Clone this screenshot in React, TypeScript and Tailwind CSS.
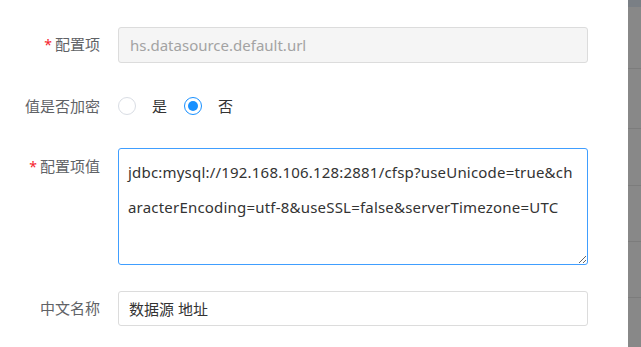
import { useState } from "react";

const font = { fontFamily: '"Noto Sans", "Noto Sans CJK SC", sans-serif' };

function Label({ text, required, top }: { text: string; required?: boolean; top?: boolean }) {
  return (
    <div
      className={`w-[118px] shrink-0 pr-[18px] text-right text-[15px] text-[#606266] leading-[36px] ${top ? "self-start" : ""}`}
    >
      {required && <span className="mr-[3px] text-[14px] text-[#f5222d]">*</span>}
      {text}
    </div>
  );
}

function Radio({ checked, label }: { checked?: boolean; label: string }) {
  return (
    <label className="flex items-center cursor-pointer">
      <span
        className={`flex h-[18px] w-[18px] items-center justify-center rounded-full border ${
          checked ? "border-[#1890ff]" : "border-[#d9dde4]"
        } bg-white`}
      >
        {checked && <span className="h-[10px] w-[10px] rounded-full bg-[#1890ff]" />}
      </span>
      <span className="ml-[16px] text-[15px] text-[#333]">{label}</span>
    </label>
  );
}

export default function App() {
  const [encrypted, setEncrypted] = useState(false);
  const [value, setValue] = useState(
    "jdbc:mysql://192.168.106.128:2881/cfsp?useUnicode=true&characterEncoding=utf-8&useSSL=false&serverTimezone=UTC"
  );

  return (
    <div className="flex h-[347px] w-[641px] overflow-hidden bg-white" style={font}>
      <div className="w-[628px] shrink-0 pt-[26px]">
        {/* 配置项 */}
        <div className="flex items-center">
          <Label text="配置项" required />
          <input
            disabled
            value="hs.datasource.default.url"
            className="h-[36px] w-[470px] rounded-[3px] border border-[#dcdcdc] bg-[#f5f5f5] px-[11px] text-[15px] text-[#a3a3a3]"
          />
        </div>

        {/* 值是否加密 */}
        <div className="mt-[23px] flex h-[40px] items-center">
          <Label text="值是否加密" />
          <div className="flex items-center gap-[17px]" onClick={() => setEncrypted(!encrypted)}>
            <Radio label="是" checked={encrypted} />
            <Radio label="否" checked={!encrypted} />
          </div>
        </div>

        {/* 配置项值 */}
        <div className="mt-[22px] flex">
          <Label text="配置项值" required top />
          <textarea
            value={value}
            onChange={(e) => setValue(e.target.value)}
            className="h-[117px] w-[470px] rounded-[3px] border border-[#409eff] px-[9px] py-[6px] text-[15px] leading-[35px] tracking-[0.2px] text-[#333] outline-none [word-break:break-all]"
          />
        </div>

        {/* 中文名称 */}
        <div className="mt-[25px] flex items-center">
          <Label text="中文名称" />
          <input
            value="数据源 地址"
            readOnly
            className="h-[35px] w-[470px] rounded-[3px] border border-[#dcdcdc] bg-white px-[10px] text-[15px] text-[#333]"
          />
        </div>
      </div>

      {/* overlay strip */}
      <div className="flex w-[13px] flex-col bg-[#888888]">
        <div className="h-[7px] bg-[#7a7f85]" />
        <div className="h-[61px]" />
        <div className="h-[60px] border-t border-[#7c7c7c]" />
        <div className="h-[57px] border-t border-[#7c7c7c]" />
        <div className="h-[56px] border-t border-[#7c7c7c]" />
        <div className="h-[56px] border-t border-[#7c7c7c]" />
        <div className="flex-1 border-t border-[#7c7c7c]" />
      </div>
    </div>
  );
}
